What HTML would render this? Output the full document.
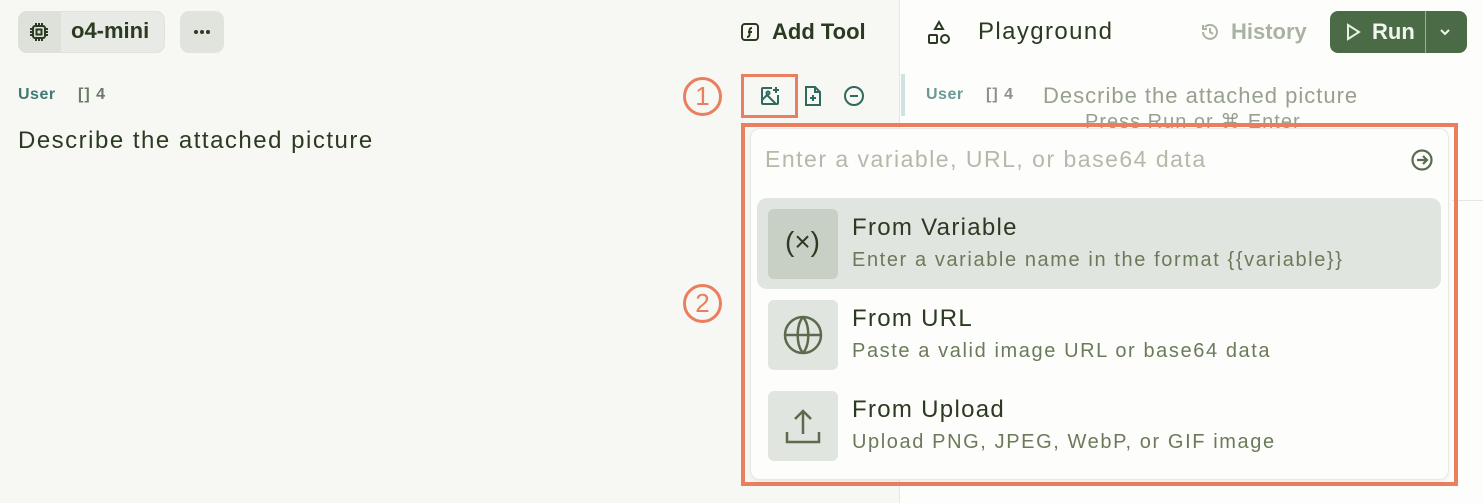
<!DOCTYPE html>
<html><head><style>
*{margin:0;padding:0;box-sizing:border-box}
body{width:1483px;height:503px;overflow:hidden;position:relative;font-family:"Liberation Sans",sans-serif;background:#fdfdfb}
.a{position:absolute}
.left{left:0;top:0;width:900px;height:503px;background:#f7f7f3;border-right:1px solid #e6e7e2}
.t{position:absolute;white-space:nowrap}
</style></head><body>
<div class="a left"></div>
<div class="a" style="left:18px;top:11px;width:147px;height:42px;border-radius:9px;background:#e8ebe5;border:1px solid #e0e3dc"></div>
<div class="a" style="left:18px;top:11px;width:43px;height:42px;border-radius:9px 0 0 9px;background:#dde1da"></div>
<svg class="a" style="left:28px;top:21px" width="22" height="22" viewBox="0 0 22 22" fill="none" stroke="#2c3a22" stroke-width="2"><rect x="5" y="5" width="12" height="12" rx="2"/><rect x="8.5" y="8.5" width="5" height="5"/><path d="M8 2v3M11 2v3M14 2v3M8 17v3M11 17v3M14 17v3M2 8h3M2 11h3M2 14h3M17 8h3M17 11h3M17 14h3"/></svg>
<div class="t" style="left:71px;top:18px;font-size:22px;font-weight:bold;color:#2c3a22">o4-mini</div>
<div class="a" style="left:180px;top:11px;width:44px;height:42px;border-radius:9px;background:#e0e4dd"></div>
<svg class="a" style="left:192px;top:29px" width="20" height="6" viewBox="0 0 20 6" fill="#2c3a22"><circle cx="4" cy="3" r="2"/><circle cx="10" cy="3" r="2"/><circle cx="16" cy="3" r="2"/></svg>
<svg class="a" style="left:740px;top:22px" width="20" height="20" viewBox="0 0 20 20" fill="none" stroke="#2c3a22" stroke-width="2"><rect x="2" y="2" width="16" height="16" rx="3"/><path d="M12 6c-2 0-2.5 1-2.5 2.5v4c0 1.5-.5 2.5-2.5 2.5M8 10h4"/></svg>
<div class="t" style="left:772px;top:19px;font-size:22px;font-weight:bold;color:#2c3a22">Add Tool</div>
<div class="t" style="left:18px;top:86px;font-size:16px;font-weight:bold;color:#3f7a74;letter-spacing:.5px">User</div>
<div class="t" style="left:78px;top:86px;font-size:16px;font-weight:bold;color:#6b7a66;letter-spacing:1px">[] 4</div>
<div class="t" style="left:18px;top:127px;font-size:24px;color:#2c3a22;letter-spacing:1.5px">Describe the attached picture</div>
<svg class="a" style="left:759px;top:85px" width="22" height="22" viewBox="0 0 22 22" fill="none" stroke="#2f6a5e" stroke-width="2"><path d="M13 3H4a1 1 0 0 0-1 1v14a1 1 0 0 0 1 1h14a1 1 0 0 0 1-1v-8M3 15l5-5 9 9M17 2v6M14 5h6"/><circle cx="9" cy="8" r="1.5"/></svg>
<svg class="a" style="left:803px;top:85px" width="20" height="22" viewBox="0 0 20 22" fill="none" stroke="#2f6a5e" stroke-width="2"><path d="M3 2h9l5 5v13H3zM12 2v5h5M10 10v6M7 13h6"/></svg>
<svg class="a" style="left:843px;top:85px" width="22" height="22" viewBox="0 0 22 22" fill="none" stroke="#2f6a5e" stroke-width="2"><circle cx="11" cy="11" r="9"/><path d="M7 11h8"/></svg>
<div class="a" style="left:741px;top:74px;width:57px;height:44px;border:3px solid #e97f5f"></div>
<div class="a" style="left:683px;top:77px;width:39px;height:39px;border-radius:50%;border:3px solid #e97f5f;color:#e97f5f;font-size:26px;text-align:center;line-height:33px">1</div>
<div class="a" style="left:683px;top:284px;width:39px;height:39px;border-radius:50%;border:3px solid #e97f5f;color:#e97f5f;font-size:26px;text-align:center;line-height:33px">2</div>
<svg class="a" style="left:926px;top:20px" width="26" height="26" viewBox="0 0 26 26" fill="none" stroke="#2c3a22" stroke-width="2"><path d="M13 2l4 7H9z"/><rect x="3" y="15" width="8" height="8" rx="1"/><circle cx="19" cy="19" r="4"/></svg>
<div class="t" style="left:978px;top:18px;font-size:24px;color:#2c3a22;letter-spacing:1.4px">Playground</div>
<svg class="a" style="left:1200px;top:22px" width="20" height="20" viewBox="0 0 20 20" fill="none" stroke="#aab3a3" stroke-width="2"><path d="M3 10a7 7 0 1 0 2-5M3 3v4h4M10 6v4l3 2"/></svg>
<div class="t" style="left:1231px;top:19px;font-size:22px;font-weight:bold;color:#aab3a3">History</div>
<div class="a" style="left:1330px;top:11px;width:137px;height:42px;border-radius:8px;background:#4b6b47"></div>
<div class="a" style="left:1425px;top:11px;width:1px;height:42px;background:#9bb097"></div>
<svg class="a" style="left:1343px;top:22px" width="20" height="20" viewBox="0 0 20 20" fill="none" stroke="#e8efe4" stroke-width="2"><path d="M5 3l11 7-11 7z"/></svg>
<div class="t" style="left:1372px;top:19px;font-size:22px;font-weight:bold;color:#f1f5ee">Run</div>
<svg class="a" style="left:1437px;top:24px" width="16" height="16" viewBox="0 0 16 16" fill="none" stroke="#f1f5ee" stroke-width="2"><path d="M4 6l4 4 4-4"/></svg>
<div class="a" style="left:901px;top:74px;width:4px;height:42px;background:#cde3e0"></div>
<div class="t" style="left:926px;top:86px;font-size:16px;font-weight:bold;color:#6a9a95;letter-spacing:.5px">User</div>
<div class="t" style="left:986px;top:86px;font-size:16px;font-weight:bold;color:#8a9585;letter-spacing:1px">[] 4</div>
<div class="t" style="left:1043px;top:83px;font-size:22px;color:#97a08f;letter-spacing:1px">Describe the attached picture</div>
<div class="t" style="left:1085px;top:109px;font-size:20px;color:#97a08f;letter-spacing:1px">Press Run or ⌘ Enter</div>
<div class="a" style="left:1452px;top:200px;width:31px;height:1px;background:#e6e7e2"></div>
<div class="a" style="left:741px;top:123px;width:717px;height:363px;border:4px solid #e97f5f"></div>
<div class="a" style="left:750px;top:128px;width:699px;height:352px;border-radius:10px;background:#fdfdfb;border:1px solid #e8e9e4;box-shadow:0 2px 4px rgba(0,0,0,.06)"></div>
<div class="t" style="left:765px;top:146px;font-size:23px;color:#b4b9aa;letter-spacing:1.5px">Enter a variable, URL, or base64 data</div>
<svg class="a" style="left:1410px;top:148px" width="24" height="24" viewBox="0 0 24 24" fill="none" stroke="#5c6a4d" stroke-width="2.2"><circle cx="12" cy="12" r="9.5"/><path d="M7 12h10M13 8l4 4-4 4"/></svg>
<div class="a" style="left:757px;top:198px;width:684px;height:91px;border-radius:10px;background:#e1e5df"></div>
<div class="a" style="left:768px;top:209px;width:70px;height:70px;border-radius:6px;background:#c8d0c6"></div>
<div class="a" style="left:768px;top:300px;width:70px;height:70px;border-radius:6px;background:#e1e5df"></div>
<div class="a" style="left:768px;top:391px;width:70px;height:70px;border-radius:6px;background:#e1e5df"></div>
<div class="t" style="left:785px;top:226px;font-size:28px;color:#2c3a22">(×)</div>
<svg class="a" style="left:783px;top:315px" width="40" height="40" viewBox="0 0 40 40" fill="none" stroke="#5c6a4d" stroke-width="2.5"><circle cx="20" cy="20" r="18"/><path d="M2 20h36M20 2c-7 8-7 28 0 36M20 2c7 8 7 28 0 36"/></svg>
<svg class="a" style="left:783px;top:406px" width="40" height="40" viewBox="0 0 40 40" fill="none" stroke="#5c6a4d" stroke-width="2.5"><path d="M20 28V6M12 13l8-8 8 8M4 26v10h32V26"/></svg>
<div class="t" style="left:852px;top:214px;font-size:24px;color:#2c3a22;letter-spacing:1.3px">From Variable</div>
<div class="t" style="left:852px;top:249px;font-size:20px;color:#6b7a5a;letter-spacing:1.6px">Enter a variable name in the format {{variable}}</div>
<div class="t" style="left:852px;top:305px;font-size:24px;color:#2c3a22;letter-spacing:1.3px">From URL</div>
<div class="t" style="left:852px;top:340px;font-size:20px;color:#6b7a5a;letter-spacing:1.6px">Paste a valid image URL or base64 data</div>
<div class="t" style="left:852px;top:396px;font-size:24px;color:#2c3a22;letter-spacing:1.3px">From Upload</div>
<div class="t" style="left:852px;top:431px;font-size:20px;color:#6b7a5a;letter-spacing:1.6px">Upload PNG, JPEG, WebP, or GIF image</div>
</body></html>
